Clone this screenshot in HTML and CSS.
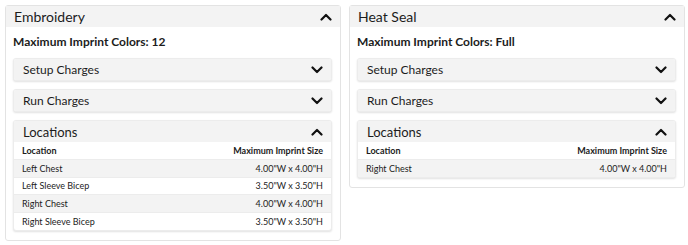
FILE: index.html
```html
<!DOCTYPE html>
<html lang="en">
  <head>
    <meta charset="UTF-8">
    <title>Imprint Methods</title>
    <link rel="stylesheet" href="styles.css">
  </head>
  <body>

    <div id="methods">

      <div class="card">
        <div class="card-head">
          <span>Embroidery</span>
          <svg class="chev" width="12" height="8" viewBox="0 0 12 8"><polyline points="1.5,6.5 6,2 10.5,6.5"/></svg>
        </div>
        <div class="card-body">
          <div class="colors">Maximum Imprint Colors: 12</div>
          <div class="panel">
            <div class="panel-head">
              <span>Setup Charges</span>
              <svg class="chev" width="12" height="8" viewBox="0 0 12 8"><polyline points="1.5,1.5 6,6 10.5,1.5"/></svg>
            </div>
          </div>
          <div class="panel">
            <div class="panel-head">
              <span>Run Charges</span>
              <svg class="chev" width="12" height="8" viewBox="0 0 12 8"><polyline points="1.5,1.5 6,6 10.5,1.5"/></svg>
            </div>
          </div>
          <div class="panel">
            <div class="panel-head big">
              <span>Locations</span>
              <svg class="chev" width="12" height="8" viewBox="0 0 12 8"><polyline points="1.5,6.5 6,2 10.5,6.5"/></svg>
            </div>
            <table class="locations">
              <tr><th>Location</th><th>Maximum Imprint Size</th></tr>
              <tr><td>Left Chest</td><td>4.00"W x 4.00"H</td></tr>
              <tr><td>Left Sleeve Bicep</td><td>3.50"W x 3.50"H</td></tr>
              <tr><td>Right Chest</td><td>4.00"W x 4.00"H</td></tr>
              <tr><td>Right Sleeve Bicep</td><td>3.50"W x 3.50"H</td></tr>
            </table>
          </div>
        </div>
      </div>

      <div class="card">
        <div class="card-head">
          <span>Heat Seal</span>
          <svg class="chev" width="12" height="8" viewBox="0 0 12 8"><polyline points="1.5,6.5 6,2 10.5,6.5"/></svg>
        </div>
        <div class="card-body">
          <div class="colors">Maximum Imprint Colors: Full</div>
          <div class="panel">
            <div class="panel-head">
              <span>Setup Charges</span>
              <svg class="chev" width="12" height="8" viewBox="0 0 12 8"><polyline points="1.5,1.5 6,6 10.5,1.5"/></svg>
            </div>
          </div>
          <div class="panel">
            <div class="panel-head">
              <span>Run Charges</span>
              <svg class="chev" width="12" height="8" viewBox="0 0 12 8"><polyline points="1.5,1.5 6,6 10.5,1.5"/></svg>
            </div>
          </div>
          <div class="panel">
            <div class="panel-head big">
              <span>Locations</span>
              <svg class="chev" width="12" height="8" viewBox="0 0 12 8"><polyline points="1.5,6.5 6,2 10.5,6.5"/></svg>
            </div>
            <table class="locations">
              <tr><th>Location</th><th>Maximum Imprint Size</th></tr>
              <tr><td>Right Chest</td><td>4.00"W x 4.00"H</td></tr>
            </table>
          </div>
        </div>
      </div>

    </div>

  </body>
</html>
```
FILE: styles.css
```css
html, body {
  margin: 0;
  padding: 0;
  box-sizing: border-box;
}
*, *:before, *:after {
  box-sizing: inherit;
}
body {
  font-family: Lato, 'Helvetica Neue', Arial, sans-serif;
  color: #1c1c1c;
  background-color: #fff;
}
#methods {
  display: grid;
  grid-template-columns: 336px 336px;
  column-gap: 8px;
  align-items: start;
  padding: 5px 4px 0 5px;
}
.card {
  border: 1px solid #e3e3e3;
  border-radius: 3px;
  background-color: #fff;
}
.card-head {
  display: flex;
  align-items: center;
  justify-content: space-between;
  height: 21px;
  padding: 0 8px 0 8px;
  background-color: #f3f3f3;
  font-size: 14px;
}
.card-body {
  display: flex;
  flex-direction: column;
  gap: 8px;
  padding: 7px 8px 9px 7px;
}
.colors {
  font-size: 12px;
  font-weight: bold;
  line-height: 16px;
}
.panel {
  border: 1px solid #ececec;
  border-radius: 3px;
  box-shadow: 0 1px 2px rgba(0, 0, 0, 0.12);
  background-color: #fff;
  overflow: hidden;
}
.panel-head {
  display: flex;
  align-items: center;
  justify-content: space-between;
  height: 21px;
  padding: 0 8px 0 9px;
  background-color: #f3f3f3;
  font-size: 12px;
}
.panel-head.big {
  font-size: 13px;
}
.chev {
  fill: none;
  stroke: #111;
  stroke-width: 2.2;
  stroke-linecap: round;
  stroke-linejoin: round;
}
.locations {
  width: 100%;
  border-collapse: collapse;
  font-size: 9px;
}
.locations th,
.locations td {
  height: 17.6px;
  padding: 0 8px 0 8px;
  text-align: left;
  border-top: 1px solid #ececec;
}
.locations th {
  font-weight: bold;
  border-top: none;
}
.locations th:last-child,
.locations td:last-child {
  text-align: right;
}
.locations tr:nth-child(even) td {
  background-color: #f3f3f3;
}
```
